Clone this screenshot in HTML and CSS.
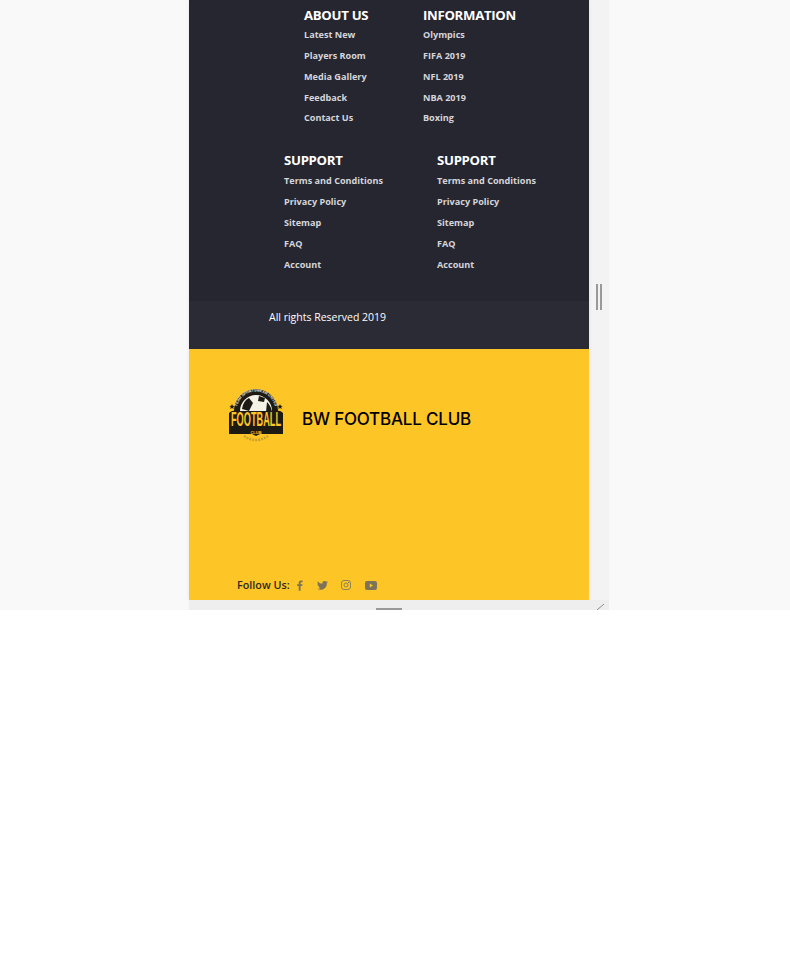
FILE: index.html
```html
<!DOCTYPE html>
<html lang="en">
<head>
    <meta charset="UTF-8">
    <meta name="viewport" content="width=device-width, initial-scale=1.0">
    <title>BW Football Club</title>
    <link rel="stylesheet" href="styles.css">
</head>
<body>
    <div class="stage">
        <div class="frame">
            <div class="panel">
                <footer class="dark">
                    <div class="links links-top">
                        <div class="col col-about">
                            <h3>ABOUT US</h3>
                            <ul>
                                <li>Latest New</li>
                                <li>Players Room</li>
                                <li>Media Gallery</li>
                                <li>Feedback</li>
                                <li class="last">Contact Us</li>
                            </ul>
                        </div>
                        <div class="col">
                            <h3>INFORMATION</h3>
                            <ul>
                                <li>Olympics</li>
                                <li>FIFA 2019</li>
                                <li>NFL 2019</li>
                                <li>NBA 2019</li>
                                <li class="last">Boxing</li>
                            </ul>
                        </div>
                    </div>
                    <div class="links links-bottom">
                        <div class="col col-support">
                            <h3>SUPPORT</h3>
                            <ul>
                                <li>Terms and Conditions</li>
                                <li>Privacy Policy</li>
                                <li>Sitemap</li>
                                <li>FAQ</li>
                                <li>Account</li>
                            </ul>
                        </div>
                        <div class="col">
                            <h3>SUPPORT</h3>
                            <ul>
                                <li>Terms and Conditions</li>
                                <li>Privacy Policy</li>
                                <li>Sitemap</li>
                                <li>FAQ</li>
                                <li>Account</li>
                            </ul>
                        </div>
                    </div>
                </footer>
                <div class="copyright">All rights Reserved 2019</div>
                <section class="brand">
                    <div class="brand-top">
                        <svg class="logo" width="56" height="54" viewBox="0 0 56 54">
                            <circle cx="28" cy="22" r="22" fill="#1d1a14"/>
                            <circle cx="28" cy="22" r="16" fill="#f4f1e6"/>
                            <path d="M14 20 Q15 12 21 9 L25 14 L21 22 Z M31 7 L37 9 L36 13 L30 12 Z M39 13 Q43 17 44 23 L38 23 Z" fill="#1d1a14"/>
                            <path id="arc" d="M8.500 22 A19.500 19.500 0 0 1 47.500 22" fill="none"/>
                            <text class="logo-arc"><textPath href="#arc" startOffset="50%" text-anchor="middle">TEAM SPORTSWEAR UNITED</textPath></text>
                            <path d="M1 24 Q4 21 7 22 L49 22 Q52 21 55 24 L55 45 L32 45 L28 47 L24 45 L1 45 Z" fill="#1d1a14"/>
                            <text class="logo-main" text-anchor="middle" transform="translate(28 37) scale(.8 1.75)">FOOTBALL</text>
                            <text class="logo-club" x="28" y="44.500" text-anchor="middle">CLUB</text>
                            <path d="M16 47 Q28 55 40 47" fill="none" stroke="#c9a02c" stroke-width="2.500" stroke-dasharray="2 1"/>
                            <path d="M4 15 l.8 1.800 1.900 .1 -1.500 1.200 .5 1.900 -1.700 -1 -1.700 1 .5 -1.900 -1.500 -1.200 1.900 -.1 Z M52 15 l.8 1.800 1.900 .1 -1.500 1.200 .5 1.900 -1.700 -1 -1.700 1 .5 -1.900 -1.500 -1.200 1.900 -.1 Z" fill="#1d1a14"/>
                        </svg>
                        <h2>BW FOOTBALL CLUB</h2>
                    </div>
                    <div class="follow">
                        <span class="follow-label">Follow Us:</span>
                        <svg class="icon icon-fb" width="6" height="11" viewBox="0 0 7 12"><path d="M2 12 V6.700 H0.200 V4.600 H2 V3 C2 1.200 3.100 .2 4.700 .2 L6.500 .3 V2.200 H5.300 C4.400 2.200 4.200 2.600 4.200 3.300 V4.600 H6.400 L6.100 6.700 H4.200 V12 Z"/></svg>
                        <svg class="icon icon-tw" width="11" height="9" viewBox="0 0 24 20"><path d="M24 2.400 a10 10 0 0 1-2.800.8 A5 5 0 0 0 23.300.5 a10 10 0 0 1-3.100 1.200 A4.900 4.900 0 0 0 11.800 6.200 A14 14 0 0 1 1.700.9 a4.900 4.900 0 0 0 1.500 6.600 A5 5 0 0 1 1 6.900 a4.900 4.900 0 0 0 3.900 4.900 a5 5 0 0 1-2.200.1 A4.900 4.900 0 0 0 7.300 15.300 A10 10 0 0 1 0 17.300 A14 14 0 0 0 21.600 5 A10 10 0 0 0 24 2.400 Z"/></svg>
                        <svg class="icon icon-ig" width="10" height="10" viewBox="0 0 10 10"><rect x=".5" y=".5" width="9" height="9" rx="2.500" fill="none" stroke="#8f8453"/><circle cx="5" cy="5" r="2" fill="none" stroke="#8f8453"/><circle cx="7.600" cy="2.400" r=".6"/></svg>
                        <svg class="icon icon-yt" width="12" height="9" viewBox="0 0 12 9"><path fill-rule="evenodd" d="M2 0 H10 Q12 0 12 2 V7 Q12 9 10 9 H2 Q0 9 0 7 V2 Q0 0 2 0 Z M4.800 2.500 V6.500 L8 4.500 Z"/></svg>
                    </div>
                </section>
            </div>
            <div class="grip-side"><i></i><i></i></div>
        </div>
        <div class="grip-bottom">
            <i class="grip-bar"></i>
            <svg class="grip-corner" width="10" height="6" viewBox="0 0 10 6"><path d="M1 6 L8 0" stroke="#8a8a8a" fill="none"/></svg>
        </div>
    </div>
</body>
</html>
```

FILE: styles.css
```css
html, body {
    margin: 0;
    background-color: #fff;
}
body {
    font-family: "Open Sans", sans-serif;
}
.stage {
    height: 610px;
    overflow: hidden;
    background-color: #f9f9f9;
    position: relative;
}
.frame {
    margin-left: 189px;
    width: 420px;
    display: flex;
    background-color: #f3f3f3;
}
.panel {
    width: 400px;
    flex: none;
    box-shadow: 0 0 4px rgba(0,0,0,0.08);
}
.dark {
    height: 301px;
    background-color: #262630;
    box-sizing: border-box;
    padding-top: 7px;
}
.links {
    display: flex;
}
.links-top {
    padding-left: 115px;
    height: 145px;
}
.links-bottom {
    padding-left: 95px;
}
.links-bottom ul {
    margin-top: 5px;
}
.col-about {
    width: 119px;
}
.col-support {
    width: 153px;
}
h3 {
    margin: 0;
    color: #fff;
    font-size: 13.2px;
    line-height: 17px;
    font-weight: 700;
    letter-spacing: -0.3px;
}
ul {
    list-style: none;
    margin: 4px 0 0;
    padding: 0;
}
li {
    color: #d5d5da;
    font-size: 9.1px;
    font-weight: 700;
    line-height: 13px;
    margin-bottom: 8px;
    white-space: nowrap;
}
.links-top li.last {
    margin-top: -1px;
}
.copyright {
    height: 48px;
    box-sizing: border-box;
    padding: 9px 0 0 80px;
    background-color: #2b2b36;
    color: #fff;
    font-size: 10.5px;
    line-height: 15px;
}
.brand {
    height: 251px;
    box-sizing: border-box;
    background-color: #fec526;
    padding: 40px 0 0 39px;
    position: relative;
}
.brand-top {
    display: flex;
    align-items: center;
}
.logo {
    flex: none;
}
.logo-arc {
    font-family: "Liberation Sans", sans-serif;
    font-size: 3.6px;
    font-weight: 700;
    fill: #f4f1e6;
}
.logo-main {
    font-family: "Liberation Sans", sans-serif;
    font-size: 11.5px;
    font-weight: 700;
    fill: #fec526;
}
.logo-club {
    font-family: "Liberation Sans", sans-serif;
    font-size: 4px;
    font-weight: 700;
    fill: #fec526;
}
.brand h2 {
    margin: 6px 0 0 18px;
    font-family: Inter, sans-serif;
    font-size: 17px;
    font-weight: 500;
    color: #000;
    letter-spacing: -0.2px;
    white-space: nowrap;
}
.follow {
    margin-top: 133px;
    margin-left: 9px;
    display: flex;
    align-items: center;
    height: 16px;
}
.follow-label {
    font-size: 10.8px;
    font-weight: 600;
    color: #2b2a26;
    white-space: nowrap;
    margin-right: 6px;
}
.icon {
    fill: #7c7358;
    flex: none;
    margin-top: 2px;
}
.icon-fb { margin-left: 1px; margin-right: 14px; }
.icon-tw { margin-right: 13px; }
.icon-ig { margin-right: 14px; }
.grip-side {
    display: flex;
    gap: 2px;
    margin: 284px 0 0 7px;
    height: 26px;
}
.grip-side i {
    display: block;
    width: 2px;
    height: 26px;
    background-color: #999;
}
.grip-bottom {
    position: absolute;
    left: 189px;
    top: 600px;
    width: 420px;
    height: 10px;
    background-color: #eee;
}
.grip-bar {
    position: absolute;
    left: 187px;
    top: 8px;
    width: 26px;
    height: 2px;
    background-color: #999;
}
.grip-corner {
    position: absolute;
    right: 3px;
    bottom: 0;
}
```
